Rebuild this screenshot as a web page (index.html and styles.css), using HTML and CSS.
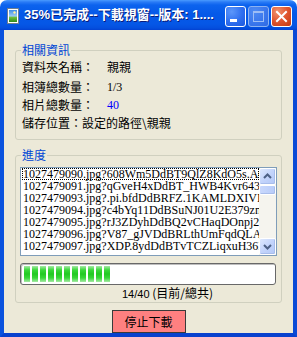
FILE: index.html
```html
<!DOCTYPE html>
<html lang="zh-Hant">
<head>
<meta charset="utf-8">
<title>下載視窗</title>
<link rel="stylesheet" href="styles.css">
</head>
<body>
<div class="window">
  <div class="titlebar">
    <svg class="app-icon" width="16" height="16" viewBox="0 0 16 16">
      <defs>
        <linearGradient id="pic" x1="0" y1="0" x2="0" y2="1">
          <stop offset="0" stop-color="#3C8CE8"/>
          <stop offset="0.5" stop-color="#9CCBF2"/>
          <stop offset="0.62" stop-color="#6CBF3A"/>
          <stop offset="1" stop-color="#2E8A1E"/>
        </linearGradient>
      </defs>
      <rect x="2.5" y="0.5" width="11" height="15" fill="#fff" stroke="#6E7F90"/>
      <rect x="4" y="2" width="8" height="12" fill="url(#pic)"/>
      <circle cx="9.5" cy="4.5" r="1.2" fill="#FFF4A0"/>
    </svg>
    <span class="title">35%已完成--下載視窗--版本: 1....</span>
    <div class="controls">
      <span class="cbtn min">
        <svg width="19" height="19" viewBox="0 0 19 19"><rect x="4" y="12" width="7" height="3" fill="#fff"/></svg>
      </span>
      <span class="cbtn max">
        <svg width="19" height="19" viewBox="0 0 19 19"><rect x="4.5" y="4.5" width="10" height="10" fill="none" stroke="#9DBDF5" stroke-width="1"/><rect x="4" y="4" width="11" height="2" fill="#9DBDF5"/></svg>
      </span>
      <span class="cbtn close">
        <svg width="19" height="19" viewBox="0 0 19 19"><path d="M5 5 L14 14 M14 5 L5 14" stroke="#fff" stroke-width="2" stroke-linecap="square"/></svg>
      </span>
    </div>
  </div>
  <div class="frame">
    <div class="client">
      <fieldset class="group info">
        <legend>相關資訊</legend>
        <div class="row first"><span class="label">資料夾名稱：</span><span class="value">親親</span></div>
        <div class="row"><span class="label">相簿總數量：</span><span class="value num">1/3</span></div>
        <div class="row"><span class="label">相片總數量：</span><span class="value num blue">40</span></div>
        <div class="row"><span class="label wide">儲存位置：設定的路徑\親親</span></div>
      </fieldset>
      <fieldset class="group progress">
        <legend>進度</legend>
        <div class="listbox">
          <ul class="items">
            <li class="focus">1027479090.jpg?608Wm5DdBT9QlZ8KdO5s.A6uXk</li>
            <li>1027479091.jpg?qGveH4xDdBT_HWB4Kvr643.kQ</li>
            <li>1027479093.jpg?.pi.bfdDdBRFZ.1KAMLDXIVI0p</li>
            <li>1027479094.jpg?c4bYq11DdBSuNJ01U2E379znT</li>
            <li>1027479095.jpg?rJ3ZDyhDdBQ2vCHaqDOnpj2Lx</li>
            <li>1027479096.jpg?V87_gJVDdBRLthUmFqdQLA1r</li>
            <li>1027479097.jpg?XDP.8ydDdBTvTCZLiqxuH36Iu</li>
          </ul>
          <div class="vscroll">
            <span class="sbtn">
              <svg width="15" height="15" viewBox="0 0 15 15"><path d="M4 9 L7.5 5.5 L11 9" fill="none" stroke="#4D6185" stroke-width="2"/></svg>
            </span>
            <span class="thumb"></span>
            <span class="track"></span>
            <span class="sbtn">
              <svg width="15" height="15" viewBox="0 0 15 15"><path d="M4 6 L7.5 9.5 L11 6" fill="none" stroke="#4D6185" stroke-width="2"/></svg>
            </span>
          </div>
        </div>
        <div class="pbar">
          <div class="pfill">
            <span></span><span></span><span></span><span></span><span></span><span></span>
            <span></span><span></span><span></span><span></span><span></span>
          </div>
        </div>
        <div class="pcount"><span class="pnum">14/40</span> (目前/總共)</div>
      </fieldset>
      <div class="actions"><button class="stop" type="button">停止下載</button></div>
    </div>
  </div>
</div>
</body>
</html>
```
FILE: styles.css
```css
* { box-sizing: border-box; }
html, body { margin: 0; padding: 0; background: #fff; }
body {
  font-family: "Noto Sans CJK TC", "Liberation Sans", sans-serif;
  font-size: 12px;
  color: #000;
}
.window {
  width: 297px;
  height: 337px;
  display: flex;
  flex-direction: column;
}
.titlebar {
  height: 30px;
  flex: none;
  display: flex;
  align-items: center;
  padding: 0 5px 0 5px;
  border-radius: 7px 7px 0 0;
  background: linear-gradient(#4A9BFF 0px, #2A7BF6 2px, #0C63EE 5px, #0559E8 14px, #0557E6 24px, #044FDE 28px, #0342D2 30px);
}
.app-icon { flex: none; margin: 2px 3px 0 0; }
.title {
  flex: 1;
  min-width: 0;
  color: #fff;
  font-family: "Liberation Sans", "Noto Sans CJK TC", sans-serif;
  font-weight: bold;
  font-size: 13px;
  line-height: 16px;
  white-space: nowrap;
  overflow: hidden;
  text-shadow: 1px 1px 0 #0A1C7A;
}
.controls { display: flex; gap: 2px; flex: none; margin-top: 3px; }
.cbtn {
  width: 21px;
  height: 21px;
  border: 1px solid #fff;
  border-radius: 3px;
  display: block;
}
.cbtn svg { display: block; }
.cbtn.min {
  background: radial-gradient(circle at 30% 25%, #5C97FA 0%, #2E6EEF 55%, #1C58DD 100%);
}
.cbtn.max {
  border-color: #8CB2F2;
  background: radial-gradient(circle at 30% 25%, #4F8BF3 0%, #3A76EC 60%, #2F69E3 100%);
}
.cbtn.close {
  background: radial-gradient(circle at 30% 25%, #F0936F 0%, #E0552F 50%, #C23A12 100%);
}
.frame {
  flex: 1;
  border-left: 4px solid #0A52DE;
  border-right: 4px solid #0A4AD6;
  border-bottom: 4px solid #0841CE;
  display: flex;
}
.client {
  flex: 1;
  background: #ECE9D8;
  padding: 13px 11px 0 11px;
  display: flex;
  flex-direction: column;
}
.group {
  margin: 0;
  min-width: 0;
  width: 267px;
  border: 1px solid #D0D0BF;
  border-radius: 3px;
}
.group legend {
  padding: 0 1px;
  margin-left: -1px;
  font-size: 12px;
  line-height: 14px;
  color: #0046D5;
}
.info { padding: 1px 5px 7px 6px; }
.row { display: flex; height: 18px; line-height: 18px; white-space: nowrap; }
.row.first { margin-bottom: 2px; }
.label { width: 85px; flex: none; }
.label.wide { width: auto; }
.value.num { font-family: "Liberation Serif", serif; font-size: 12px; }
.value.blue { color: #0000FF; }
.progress { margin-top: 8px; padding: 5px 4px 2px 4px; }
.progress legend { margin-left: 1px; }
.listbox {
  width: 257px;
  height: 89px;
  border: 1px solid #7F9DB9;
  background: #fff;
  display: flex;
}
.items {
  flex: 1;
  min-width: 0;
  margin: 0;
  padding: 0 0 0 1px;
  list-style: none;
  overflow: hidden;
  font-family: "Liberation Serif", serif;
  font-size: 12px;
  line-height: 12px;
}
.items li {
  height: 12px;
  white-space: nowrap;
  padding-left: 1px;
  border: 1px dotted transparent;
  border-width: 0;
}
.items li.focus { outline: 1px dotted #000; outline-offset: -1px; }
.vscroll {
  width: 17px;
  flex: none;
  display: flex;
  flex-direction: column;
  background: #F5F4EE;
}
.sbtn {
  height: 17px;
  flex: none;
  border: 1px solid #fff;
  border-radius: 2px;
  background: linear-gradient(135deg, #DDE8FD 0%, #C3D4FB 50%, #B3C8F7 100%);
  box-shadow: inset -1px -1px 0 #A8BDEB;
  display: flex;
  align-items: center;
  justify-content: center;
}
.sbtn svg { display: block; }
.thumb {
  height: 10px;
  flex: none;
  border: 1px solid #fff;
  border-radius: 2px;
  background: linear-gradient(90deg, #C9D8FC, #B8CCF9);
  box-shadow: inset -1px -1px 0 #A8BDEB;
}
.track { flex: 1; }
.pbar {
  margin-top: 7px;
  width: 256px;
  height: 22px;
  border: 1px solid #686868;
  border-radius: 3px;
  background: #fff;
  padding: 2px 3px;
  box-shadow: inset 1px 1px 0 #BEBEBE;
}
.pfill { display: flex; gap: 2px; height: 16px; }
.pfill span {
  width: 6px;
  height: 16px;
  flex: none;
  background: linear-gradient(#A6E9A6 0%, #3AD83A 25%, #22C922 50%, #3AD83A 75%, #A6E9A6 100%);
}
.pcount {
  margin-top: 1px;
  height: 14px;
  line-height: 14px;
  padding-left: 102px;
  white-space: nowrap;
}
.pnum { font-family: "Liberation Sans", sans-serif; font-size: 11px; }
.actions {
  margin-top: 7px;
  display: flex;
  justify-content: center;
}
.stop {
  width: 74px;
  height: 23px;
  margin: 0;
  padding: 0;
  border: 1px solid #3A3A3A;
  background: #FF8080;
  font-family: "Noto Sans CJK TC", sans-serif;
  font-size: 12px;
  line-height: 20px;
  color: #000;
}
```
